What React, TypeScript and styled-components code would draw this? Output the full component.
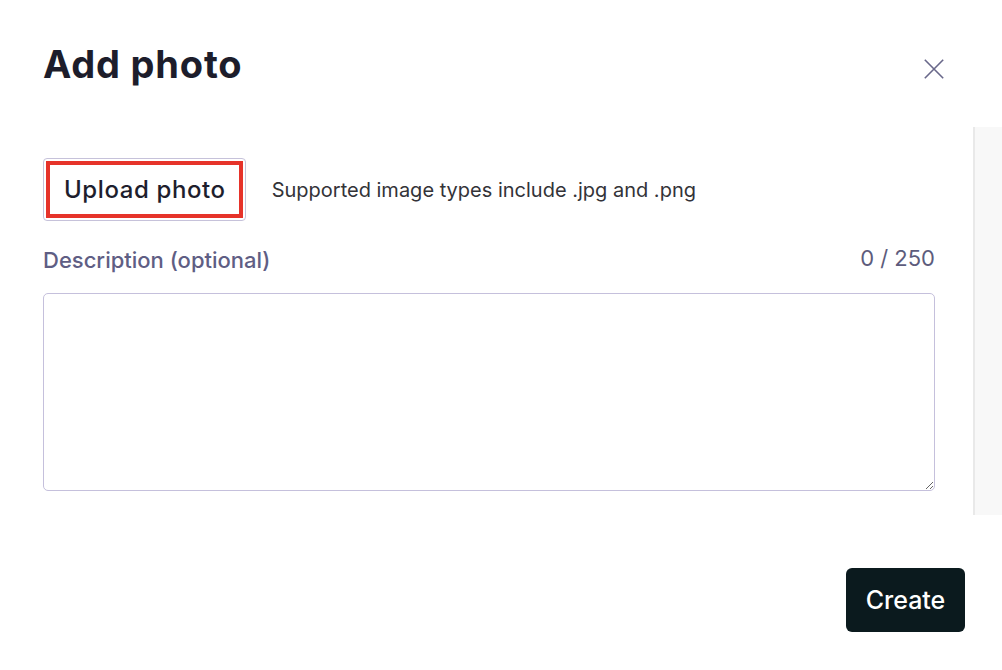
import React from "react";
import styled, { createGlobalStyle } from "styled-components";

const GlobalStyle = createGlobalStyle`
  html, body {
    margin: 0;
    padding: 0;
    background: #ffffff;
    font-family: Inter, "Noto Sans", "Liberation Sans", sans-serif;
  }
  * { box-sizing: border-box; }
`;

const Dialog = styled.div`
  width: 1002px;
  height: 670px;
  display: flex;
  flex-direction: column;
  background: #ffffff;
  overflow: hidden;
`;

const Header = styled.header`
  height: 127px;
  flex-shrink: 0;
  display: flex;
  justify-content: space-between;
  align-items: flex-start;
  padding: 41px 58px 0 43px;
`;

const Title = styled.h1`
  margin: 0;
  font-size: 38px;
  line-height: 46px;
  font-weight: 700;
  color: #1d1d2b;
  letter-spacing: 0.8px;
`;

const CloseButton = styled.button`
  margin-top: 18px;
  width: 20px;
  height: 20px;
  padding: 0;
  border: none;
  background: transparent;
  display: flex;
  align-items: center;
  justify-content: center;
  cursor: pointer;
  color: #69688a;
`;

const Body = styled.div`
  height: 388px;
  flex-shrink: 0;
  display: flex;
`;

const BodyContent = styled.div`
  flex: 1;
  min-width: 0;
  padding: 31px 38px 25px 43px;
  display: flex;
  flex-direction: column;
`;

const ScrollTrack = styled.div`
  width: 29px;
  flex-shrink: 0;
  background: #f8f8f8;
  border-left: 2px solid #e9e9e9;
`;

const UploadRow = styled.div`
  display: flex;
  align-items: center;
  gap: 26px;
`;

const UploadButton = styled.button`
  height: 63px;
  padding: 2px;
  border: 1px solid #c6c2da;
  border-radius: 4px;
  background: #ffffff;
  display: flex;
  cursor: pointer;
`;

const UploadLabel = styled.span`
  display: flex;
  align-items: center;
  height: 100%;
  padding: 0 13px 0 14px;
  border: 4px solid #e6332a;
  font-family: Inter, "Noto Sans", sans-serif;
  font-size: 24px;
  letter-spacing: 0.6px;
  font-weight: 500;
  color: #1e1e2d;
`;

const Hint = styled.span`
  font-size: 20px;
  color: #333338;
`;

const LabelRow = styled.div`
  margin-top: 22px;
  display: flex;
  justify-content: space-between;
  align-items: center;
`;

const FieldLabel = styled.label`
  font-size: 22px;
  line-height: 30px;
  font-weight: 500;
  color: #5f5e84;
`;

const Counter = styled.span`
  font-size: 22px;
  line-height: 30px;
  color: #5d5c7c;
  padding-bottom: 4px;
`;

const TextArea = styled.textarea`
  margin-top: 16px;
  width: 100%;
  height: 198px;
  flex-shrink: 0;
  border: 1px solid #c5c0dc;
  border-radius: 5px;
  padding: 10px 12px;
  font-family: Inter, "Noto Sans", sans-serif;
  font-size: 18px;
  color: #1e1e2d;
  resize: vertical;
  outline: none;
`;

const Footer = styled.footer`
  flex: 1;
  display: flex;
  justify-content: flex-end;
  align-items: flex-start;
  padding: 53px 37px 0 0;
`;

const PrimaryButton = styled.button`
  width: 119px;
  height: 64px;
  border: none;
  border-radius: 6px;
  background: #0b1a1e;
  color: #ffffff;
  font-family: Inter, "Noto Sans", sans-serif;
  font-size: 25px;
  font-weight: 500;
  cursor: pointer;
`;

export default function App() {
  return (
    <>
      <GlobalStyle />
      <Dialog>
        <Header>
          <Title>Add photo</Title>
          <CloseButton aria-label="Close">
            <svg width="20" height="20" viewBox="0 0 20 20" fill="none">
              <path
                d="M0.8 0.8L19.2 19.2M19.2 0.8L0.8 19.2"
                stroke="currentColor"
                strokeWidth="1.6"
              />
            </svg>
          </CloseButton>
        </Header>
        <Body>
          <BodyContent>
            <UploadRow>
              <UploadButton>
                <UploadLabel>Upload photo</UploadLabel>
              </UploadButton>
              <Hint>Supported image types include .jpg and .png</Hint>
            </UploadRow>
            <LabelRow>
              <FieldLabel htmlFor="desc">Description (optional)</FieldLabel>
              <Counter>0 / 250</Counter>
            </LabelRow>
            <TextArea id="desc" />
          </BodyContent>
          <ScrollTrack />
        </Body>
        <Footer>
          <PrimaryButton>Create</PrimaryButton>
        </Footer>
      </Dialog>
    </>
  );
}
